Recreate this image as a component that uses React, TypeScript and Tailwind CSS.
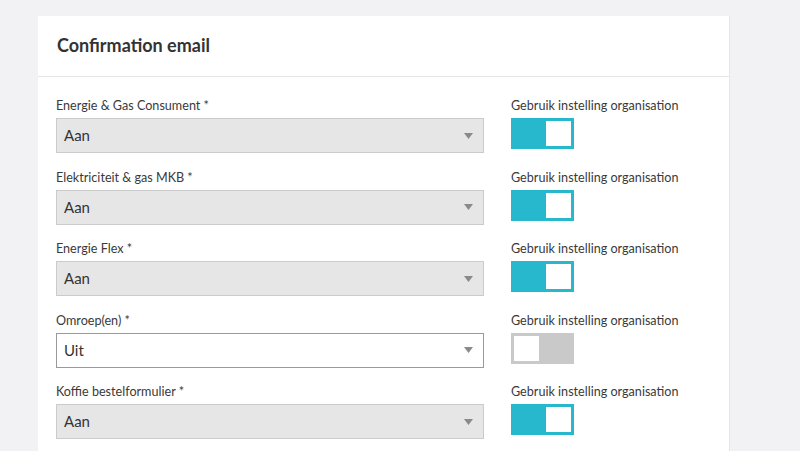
import React from "react";

type Row = {
  label: string;
  value: string;
  inherit: boolean;
};

const rows: Row[] = [
  { label: "Energie & Gas Consument *", value: "Aan", inherit: true },
  { label: "Elektriciteit & gas MKB *", value: "Aan", inherit: true },
  { label: "Energie Flex *", value: "Aan", inherit: true },
  { label: "Omroep(en) *", value: "Uit", inherit: false },
  { label: "Koffie bestelformulier *", value: "Aan", inherit: true },
];

const Toggle = ({ on }: { on: boolean }) => (
  <div
    className={`w-[63px] h-[31px] p-[3px] flex ${
      on ? "bg-[#27b8cd] justify-end" : "bg-[#c9c9c9] justify-start"
    }`}
  >
    <div className="w-[25px] h-[25px] bg-white" />
  </div>
);

const Select = ({ value, disabled }: { value: string; disabled: boolean }) => (
  <div
    className={`h-[35px] w-full flex items-center justify-between pl-[7px] pr-[10px] border ${
      disabled ? "bg-[#e6e6e6] border-[#cbcbcb]" : "bg-white border-[#9a9a9a]"
    }`}
  >
    <span className="text-[15px] text-[#333]">{value}</span>
    <svg width="9" height="6" viewBox="0 0 9 6">
      <path d="M0 0h9L4.5 6z" fill="#8a8a8a" />
    </svg>
  </div>
);

export default function App() {
  return (
    <div
      className="w-[800px] h-[451px] bg-[#f2f2f4] pt-[16px] pl-[38px] overflow-hidden"
      style={{ fontFamily: "Lato, 'Open Sans', sans-serif" }}
    >
      <div className="w-[692px] bg-white border-r border-[#e6e6e9] h-[500px]">
        <div className="h-[61px] border-b border-[#e6e6e6] flex items-center px-[19px]">
          <h1 className="text-[18px] font-bold text-[#333] pb-[1px]">Confirmation email</h1>
        </div>
        <div className="px-[18px] pt-[20px] flex flex-col gap-[15.5px]">
          {rows.map((row) => (
            <div key={row.label} className="flex gap-[27px]">
              <div className="w-[428px]">
                <div className="text-[12.6px] leading-[18px] text-[#3a3a3a] mb-[3px]">{row.label}</div>
                <Select value={row.value} disabled={row.inherit} />
              </div>
              <div>
                <div className="text-[12.6px] leading-[18px] text-[#3a3a3a] mb-[3px]">
                  Gebruik instelling organisation
                </div>
                <Toggle on={row.inherit} />
              </div>
            </div>
          ))}
        </div>
      </div>
    </div>
  );
}
